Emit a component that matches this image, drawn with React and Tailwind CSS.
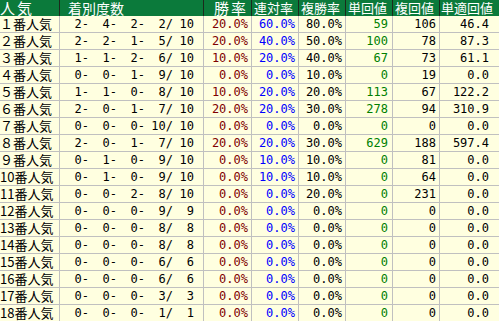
const rows = [
  ["１番人気", ["2-", "4-", "2-", "2/", "10"], "20.0%", "60.0%", "80.0%", "59", "106", "46.4"],
  ["２番人気", ["2-", "2-", "1-", "5/", "10"], "20.0%", "40.0%", "50.0%", "100", "78", "87.3"],
  ["３番人気", ["1-", "1-", "2-", "6/", "10"], "10.0%", "20.0%", "40.0%", "67", "73", "61.1"],
  ["４番人気", ["0-", "0-", "1-", "9/", "10"], "0.0%", "0.0%", "10.0%", "0", "19", "0.0"],
  ["５番人気", ["1-", "1-", "0-", "8/", "10"], "10.0%", "20.0%", "20.0%", "113", "67", "122.2"],
  ["６番人気", ["2-", "0-", "1-", "7/", "10"], "20.0%", "20.0%", "30.0%", "278", "94", "310.9"],
  ["７番人気", ["0-", "0-", "0-", "10/", "10"], "0.0%", "0.0%", "0.0%", "0", "0", "0.0"],
  ["８番人気", ["2-", "0-", "1-", "7/", "10"], "20.0%", "20.0%", "30.0%", "629", "188", "597.4"],
  ["９番人気", ["0-", "1-", "0-", "9/", "10"], "0.0%", "10.0%", "10.0%", "0", "81", "0.0"],
  ["10番人気", ["0-", "1-", "0-", "9/", "10"], "0.0%", "10.0%", "10.0%", "0", "64", "0.0"],
  ["11番人気", ["0-", "0-", "2-", "8/", "10"], "0.0%", "0.0%", "20.0%", "0", "231", "0.0"],
  ["12番人気", ["0-", "0-", "0-", "9/", "9"], "0.0%", "0.0%", "0.0%", "0", "0", "0.0"],
  ["13番人気", ["0-", "0-", "0-", "8/", "8"], "0.0%", "0.0%", "0.0%", "0", "0", "0.0"],
  ["14番人気", ["0-", "0-", "0-", "8/", "8"], "0.0%", "0.0%", "0.0%", "0", "0", "0.0"],
  ["15番人気", ["0-", "0-", "0-", "6/", "6"], "0.0%", "0.0%", "0.0%", "0", "0", "0.0"],
  ["16番人気", ["0-", "0-", "0-", "6/", "6"], "0.0%", "0.0%", "0.0%", "0", "0", "0.0"],
  ["17番人気", ["0-", "0-", "0-", "3/", "3"], "0.0%", "0.0%", "0.0%", "0", "0", "0.0"],
  ["18番人気", ["0-", "0-", "0-", "1/", "1"], "0.0%", "0.0%", "0.0%", "0", "0", "0.0"],
]

const mono = "font-['DejaVu_Sans_Mono','Noto_Sans_CJK_JP',monospace] text-[12px]"

export default function App() {
  return (
    <div className="w-[499px] h-[321px] overflow-hidden bg-[#ffffe0] font-['Noto_Sans_CJK_JP',sans-serif]">
      {/* header */}
      <div className="flex h-[16px] bg-[#0b7a3b] text-white text-[13px] leading-[16px]">
        <div className="w-[60px] border-r border-[#1c2a1c] text-[15px] tracking-[2px]">人気</div>
        <div className="w-[144px] border-r border-[#1c2a1c] pl-[8px] text-[14px]">着別度数</div>
        <div className="w-[48px] border-r border-[#1c2a1c] pl-[10px] text-[15px] tracking-[2px]">勝率</div>
        <div className="w-[47px] border-r border-[#1c2a1c] pl-[2px]">連対率</div>
        <div className="w-[47px] border-r border-[#1c2a1c] pl-[2px]">複勝率</div>
        <div className="w-[47px] border-r border-[#1c2a1c] pl-[2px]">単回値</div>
        <div className="w-[47px] border-r border-[#1c2a1c] pl-[2px]">複回値</div>
        <div className="flex-1 pl-[1px]">単適回値</div>
      </div>

      {/* rows */}
      {rows.map((r) => (
        <div key={r[0]} className="flex h-[17px] border-b border-[#c0c0c0] leading-[16px] text-black">
          <div className="w-[60px] border-r border-[#c0c0c0] text-[13px] whitespace-nowrap">{r[0]}</div>
          <div className={`w-[144px] border-r border-[#c0c0c0] flex ${mono}`}>
            <span className="w-[29px] text-right">{r[1][0]}</span>
            <span className="w-[28px] text-right">{r[1][1]}</span>
            <span className="w-[28px] text-right">{r[1][2]}</span>
            <span className="w-[28px] text-right">{r[1][3]}</span>
            <span className="w-[21px] text-right">{r[1][4]}</span>
          </div>
          <div className={`w-[48px] border-r border-[#c0c0c0] text-right pr-[3px] text-[#800000] ${mono}`}>{r[2]}</div>
          <div className={`w-[47px] border-r border-[#c0c0c0] text-right pr-[3px] text-[#0000ff] ${mono}`}>{r[3]}</div>
          <div className={`w-[47px] border-r border-[#c0c0c0] text-right pr-[3px] ${mono}`}>{r[4]}</div>
          <div className={`w-[47px] border-r border-[#c0c0c0] text-right pr-[4px] text-[#008000] ${mono}`}>{r[5]}</div>
          <div className={`w-[47px] border-r border-[#c0c0c0] text-right pr-[3px] ${mono}`}>{r[6]}</div>
          <div className={`flex-1 text-right pr-[10px] ${mono}`}>{r[7]}</div>
        </div>
      ))}
    </div>
  )
}
